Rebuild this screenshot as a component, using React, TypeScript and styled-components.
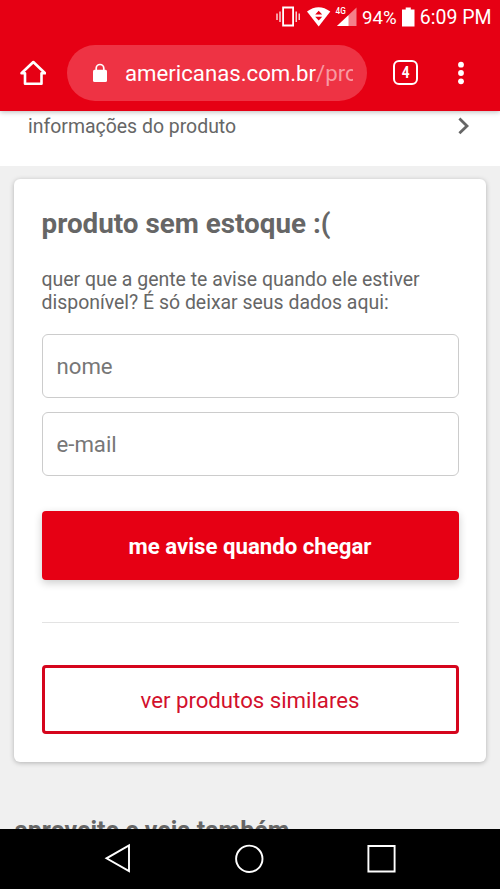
import React from "react";
import styled, { createGlobalStyle } from "styled-components";

const RED = "#e60014";
const GREY = "#666";

const GlobalStyle = createGlobalStyle`
  * { box-sizing: border-box; }
  body { margin: 0; background: #f0f0f0; font-family: Roboto, "Noto Sans", sans-serif; }
`;

const Screen = styled.div`
  display: flex;
  flex-direction: column;
  width: 500px;
  height: 889px;
  overflow: hidden;
  background: #f0f0f0;
  color: ${GREY};
`;

const BrowserHeader = styled.header`
  position: relative;
  z-index: 1;
  flex: none;
  height: 111px;
  background: ${RED};
  color: #fff;
  box-shadow: 0 1px 5px rgba(0, 0, 0, 0.28);
`;

const StatusBar = styled.div`
  display: flex;
  align-items: center;
  height: 36px;
  padding-left: 276px;
  white-space: nowrap;
`;

const StatusIcons = styled.svg`
  flex: none;
  width: 82px;
  height: 36px;
`;

const StatusText = styled.span<{ $width: number; $size: number; $gap: number }>`
  flex: none;
  width: ${(p) => p.$width}px;
  padding-left: ${(p) => p.$gap}px;
  font-size: ${(p) => p.$size}px;
  line-height: 36px;
`;

const Battery = styled.svg`
  flex: none;
  width: 12.5px;
  height: 36px;
`;

const Toolbar = styled.div`
  display: flex;
  align-items: center;
  height: 73px;
  padding-left: 20px;
`;

const ToolIcon = styled.svg<{ $gap?: number }>`
  flex: none;
  width: 26px;
  height: 28px;
  margin-left: ${(p) => p.$gap ?? 0}px;
`;

const TabCount = styled.div`
  flex: none;
  display: flex;
  align-items: center;
  justify-content: center;
  width: 25px;
  height: 25px;
  margin-left: 26px;
  border: 2.5px solid #fff;
  border-radius: 6px;
  font-size: 16.5px;
  font-weight: 700;
  line-height: 18px;
`;

const TabNumber = styled.span`
  transform: scaleX(0.82);
`;

const AddressBar = styled.div`
  flex: none;
  display: flex;
  align-items: center;
  width: 300px;
  height: 56px;
  margin-left: 21px;
  padding-left: 26px;
  border-radius: 28px;
  background: #ee3344;
`;

const Lock = styled.svg`
  flex: none;
  width: 14px;
  height: 20px;
  margin-right: 18px;
`;

const Url = styled.div`
  width: 228px;
  overflow: hidden;
  white-space: nowrap;
  font-size: 22.2px;
  line-height: 32px;
`;

const UrlPath = styled.span`
  color: #f899a1;
`;

const Page = styled.main`
  flex: 1;
  min-height: 0;
  overflow: hidden;
`;

const InfoRow = styled.div`
  display: flex;
  justify-content: space-between;
  height: 54.5px;
  padding: 0 30px 0 28px;
  background: #fff;
  font-size: 19.45px;
  line-height: 31px;
`;

const Chevron = styled.svg`
  width: 14px;
  height: 30px;
`;

const Card = styled.section`
  display: flex;
  flex-direction: column;
  height: 583px;
  margin: 13.5px 14px 0;
  padding: 25px 27.5px 0;
  border-radius: 6px;
  background: #fff;
  box-shadow: 0 1px 5px rgba(0, 0, 0, 0.26);
`;

const Title = styled.h2`
  margin: 0;
  font-size: 27.8px;
  font-weight: 700;
  line-height: 40px;
  white-space: nowrap;
`;

const Message = styled.p`
  margin: 24px 0 20px;
  font-size: 19.45px;
  line-height: 23px;
  white-space: nowrap;
`;

const Form = styled.form`
  display: flex;
  flex-direction: column;
  gap: 14px;
`;

const Field = styled.input`
  width: 100%;
  height: 64px;
  padding: 0 14px 1px;
  border: 1.5px solid #ccc;
  border-radius: 6px;
  outline: none;
  background: #fff;
  font: 22.2px Roboto, "Noto Sans", sans-serif;
  &::placeholder { color: #777; opacity: 1; }
`;

const ActionButton = styled.button<{ $primary?: boolean }>`
  flex: none;
  width: 100%;
  height: 69px;
  padding: 0;
  border: ${(p) => (p.$primary ? "none" : "3px solid #d5051d")};
  border-radius: 4px;
  background: ${(p) => (p.$primary ? RED : "#fff")};
  color: ${(p) => (p.$primary ? "#fff" : "#d2102c")};
  font-family: inherit;
  font-size: 22.2px;
  font-weight: ${(p) => (p.$primary ? 700 : 400)};
  box-shadow: ${(p) => (p.$primary ? "0 3px 8px rgba(0, 0, 0, 0.2)" : "none")};
`;

const SubmitButton = styled(ActionButton)`
  margin-top: 21px;
`;

const Divider = styled.hr`
  width: 100%;
  height: 1px;
  margin: 42px 0;
  border: 0;
  background: #e3e3e3;
`;

const NextHeading = styled.h2`
  margin: 49px 0 0 14.5px;
  font-size: 24.95px;
  font-weight: 700;
  line-height: 40px;
  white-space: nowrap;
`;

const NavBar = styled.nav`
  flex: none;
  height: 60px;
  background: #000;
`;

export default function App() {
  return (
    <Screen>
      <GlobalStyle />
      <BrowserHeader>
        <StatusBar>
          <StatusIcons viewBox="0 0 82 36" fill="none">
            <path d="M7.1 7.500h10v18h-10z" stroke="#fff" strokeWidth="1.800" />
            <path d="M1 13.500v6.500M4 11.500v10.500M20.200 11.500v10.500M23.200 13.500v6.500" stroke="#fff" strokeWidth="1.200" />
            <path d="M31 11.500Q42.500 2.800 54.300 11.500L42.700 26.500z" fill="#fff" />
            <path d="M39.200 14.600l3.500-3.800 3.500 3.800zM39.200 16.800l3.500 3.800 3.500-3.800z" fill={RED} />
            <path d="M80.500 7.500v18.500H61z" fill="#f4808a" />
            <path d="M72.500 15.200V26H61z" fill="#fff" />
            <text x="59.500" y="14" fill="#fff" fontSize="8.200" fontWeight="500" fontFamily="Roboto">4G</text>
          </StatusIcons>
          <StatusText $width={44} $size={18.7} $gap={4}>94%</StatusText>
          <Battery viewBox="0 0 12.500 36" fill="#fff">
            <path d="M3.700 7.500h5.100v2h3.700V26.500H0v-17h3.700z" />
          </Battery>
          <StatusText $width={85} $size={19.5} $gap={5.3}>6:09 PM</StatusText>
        </StatusBar>
        <Toolbar>
          <ToolIcon viewBox="0 0 26 28" fill="none" stroke="#fff" strokeWidth="2.600" strokeLinejoin="round">
            <path d="M1.500 14.200L13.300 3l11.800 11.200h-3.600v10.600H5V14.200z" />
          </ToolIcon>
          <AddressBar>
            <Lock viewBox="0 0 14 20">
              <path d="M3.200 8V5.300a3.800 3.800 0 0 1 7.600 0V8" fill="none" stroke="#fff" strokeWidth="1.700" />
              <rect y="6.800" width="14" height="12.200" rx="1.500" fill="#fff" />
            </Lock>
            <Url>americanas.com.br<UrlPath>/proc</UrlPath></Url>
          </AddressBar>
          <TabCount><TabNumber>4</TabNumber></TabCount>
          <ToolIcon $gap={30} viewBox="0 0 26 28" fill="#fff">
            <circle cx="13" cy="5.700" r="2.900" />
            <circle cx="13" cy="14" r="2.900" />
            <circle cx="13" cy="22.300" r="2.900" />
          </ToolIcon>
        </Toolbar>
      </BrowserHeader>
      <Page>
        <InfoRow>
          <span>informações do produto</span>
          <Chevron viewBox="0 0 14 30" fill="none" stroke="#666" strokeWidth="2.800">
            <path d="M3.400 7.500l7.600 7.400-7.600 7.400" />
          </Chevron>
        </InfoRow>
        <Card>
          <Title>produto sem estoque :(</Title>
          <Message>
            quer que a gente te avise quando ele estiver
            <br />
            disponível? É só deixar seus dados aqui:
          </Message>
          <Form onSubmit={(e) => e.preventDefault()}>
            <Field placeholder="nome" />
            <Field placeholder="e-mail" />
            <SubmitButton $primary>me avise quando chegar</SubmitButton>
          </Form>
          <Divider />
          <ActionButton>ver produtos similares</ActionButton>
        </Card>
        <NextHeading>aproveite e veja também</NextHeading>
      </Page>
      <NavBar>
        <svg width="500" height="60" viewBox="0 0 500 60" fill="none" stroke="#fff" strokeWidth="1.900">
          <path d="M129 16.500v25.500L106.500 29.300z" />
          <circle cx="249.300" cy="29.800" r="13.200" />
          <path d="M368.400 17h26.200v25.500h-26.200z" />
        </svg>
      </NavBar>
    </Screen>
  );
}
